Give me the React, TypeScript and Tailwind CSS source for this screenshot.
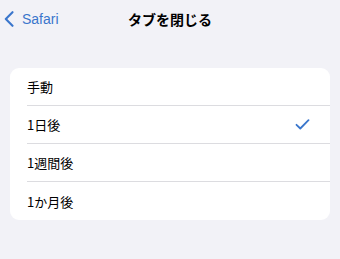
const options = ['手動', '1日後', '1週間後', '1か月後'];
const selected = '1日後';

export default function App() {
  return (
    <div
      className="w-[340px] h-[259px] bg-[#f2f2f7] text-black"
      style={{ fontFamily: '"Noto Sans CJK JP", "Liberation Sans", sans-serif' }}
    >
      <div className="relative h-[38px] flex items-center">
        <button className="flex items-center pl-[4px] gap-[8px] text-[#3a76cc] z-10">
          <svg width="10" height="16" viewBox="0 0 10 16" fill="none">
            <path
              d="M8.5 1.2 L1.8 8 L8.5 14.8"
              stroke="currentColor"
              strokeWidth="2.1"
              strokeLinecap="round"
              strokeLinejoin="round"
            />
          </svg>
          <span className="text-[14px]" style={{ fontFamily: '"Liberation Sans", sans-serif' }}>
            Safari
          </span>
        </button>
        <div className="absolute inset-0 flex items-center justify-center text-[14px] font-bold">
          タブを閉じる
        </div>
      </div>

      <div className="mx-[10px] mt-[30px] bg-white rounded-[9px] overflow-hidden">
        {options.map((o, i) => (
          <div key={o} className="pl-[17px]">
            <div
              className={`h-[38px] flex items-center justify-between pr-[20px] ${
                i < options.length - 1 ? 'border-b border-[#dcdce0]' : ''
              }`}
            >
              <span className="text-[13px] leading-none">{o}</span>
              {o === selected && (
                <svg width="15" height="11" viewBox="0 0 15 11" fill="none">
                  <path
                    d="M1.5 5.8 L5.3 9.5 L13.5 1.2"
                    stroke="#3a76cc"
                    strokeWidth="1.8"
                    strokeLinecap="round"
                    strokeLinejoin="round"
                  />
                </svg>
              )}
            </div>
          </div>
        ))}
      </div>
    </div>
  );
}
